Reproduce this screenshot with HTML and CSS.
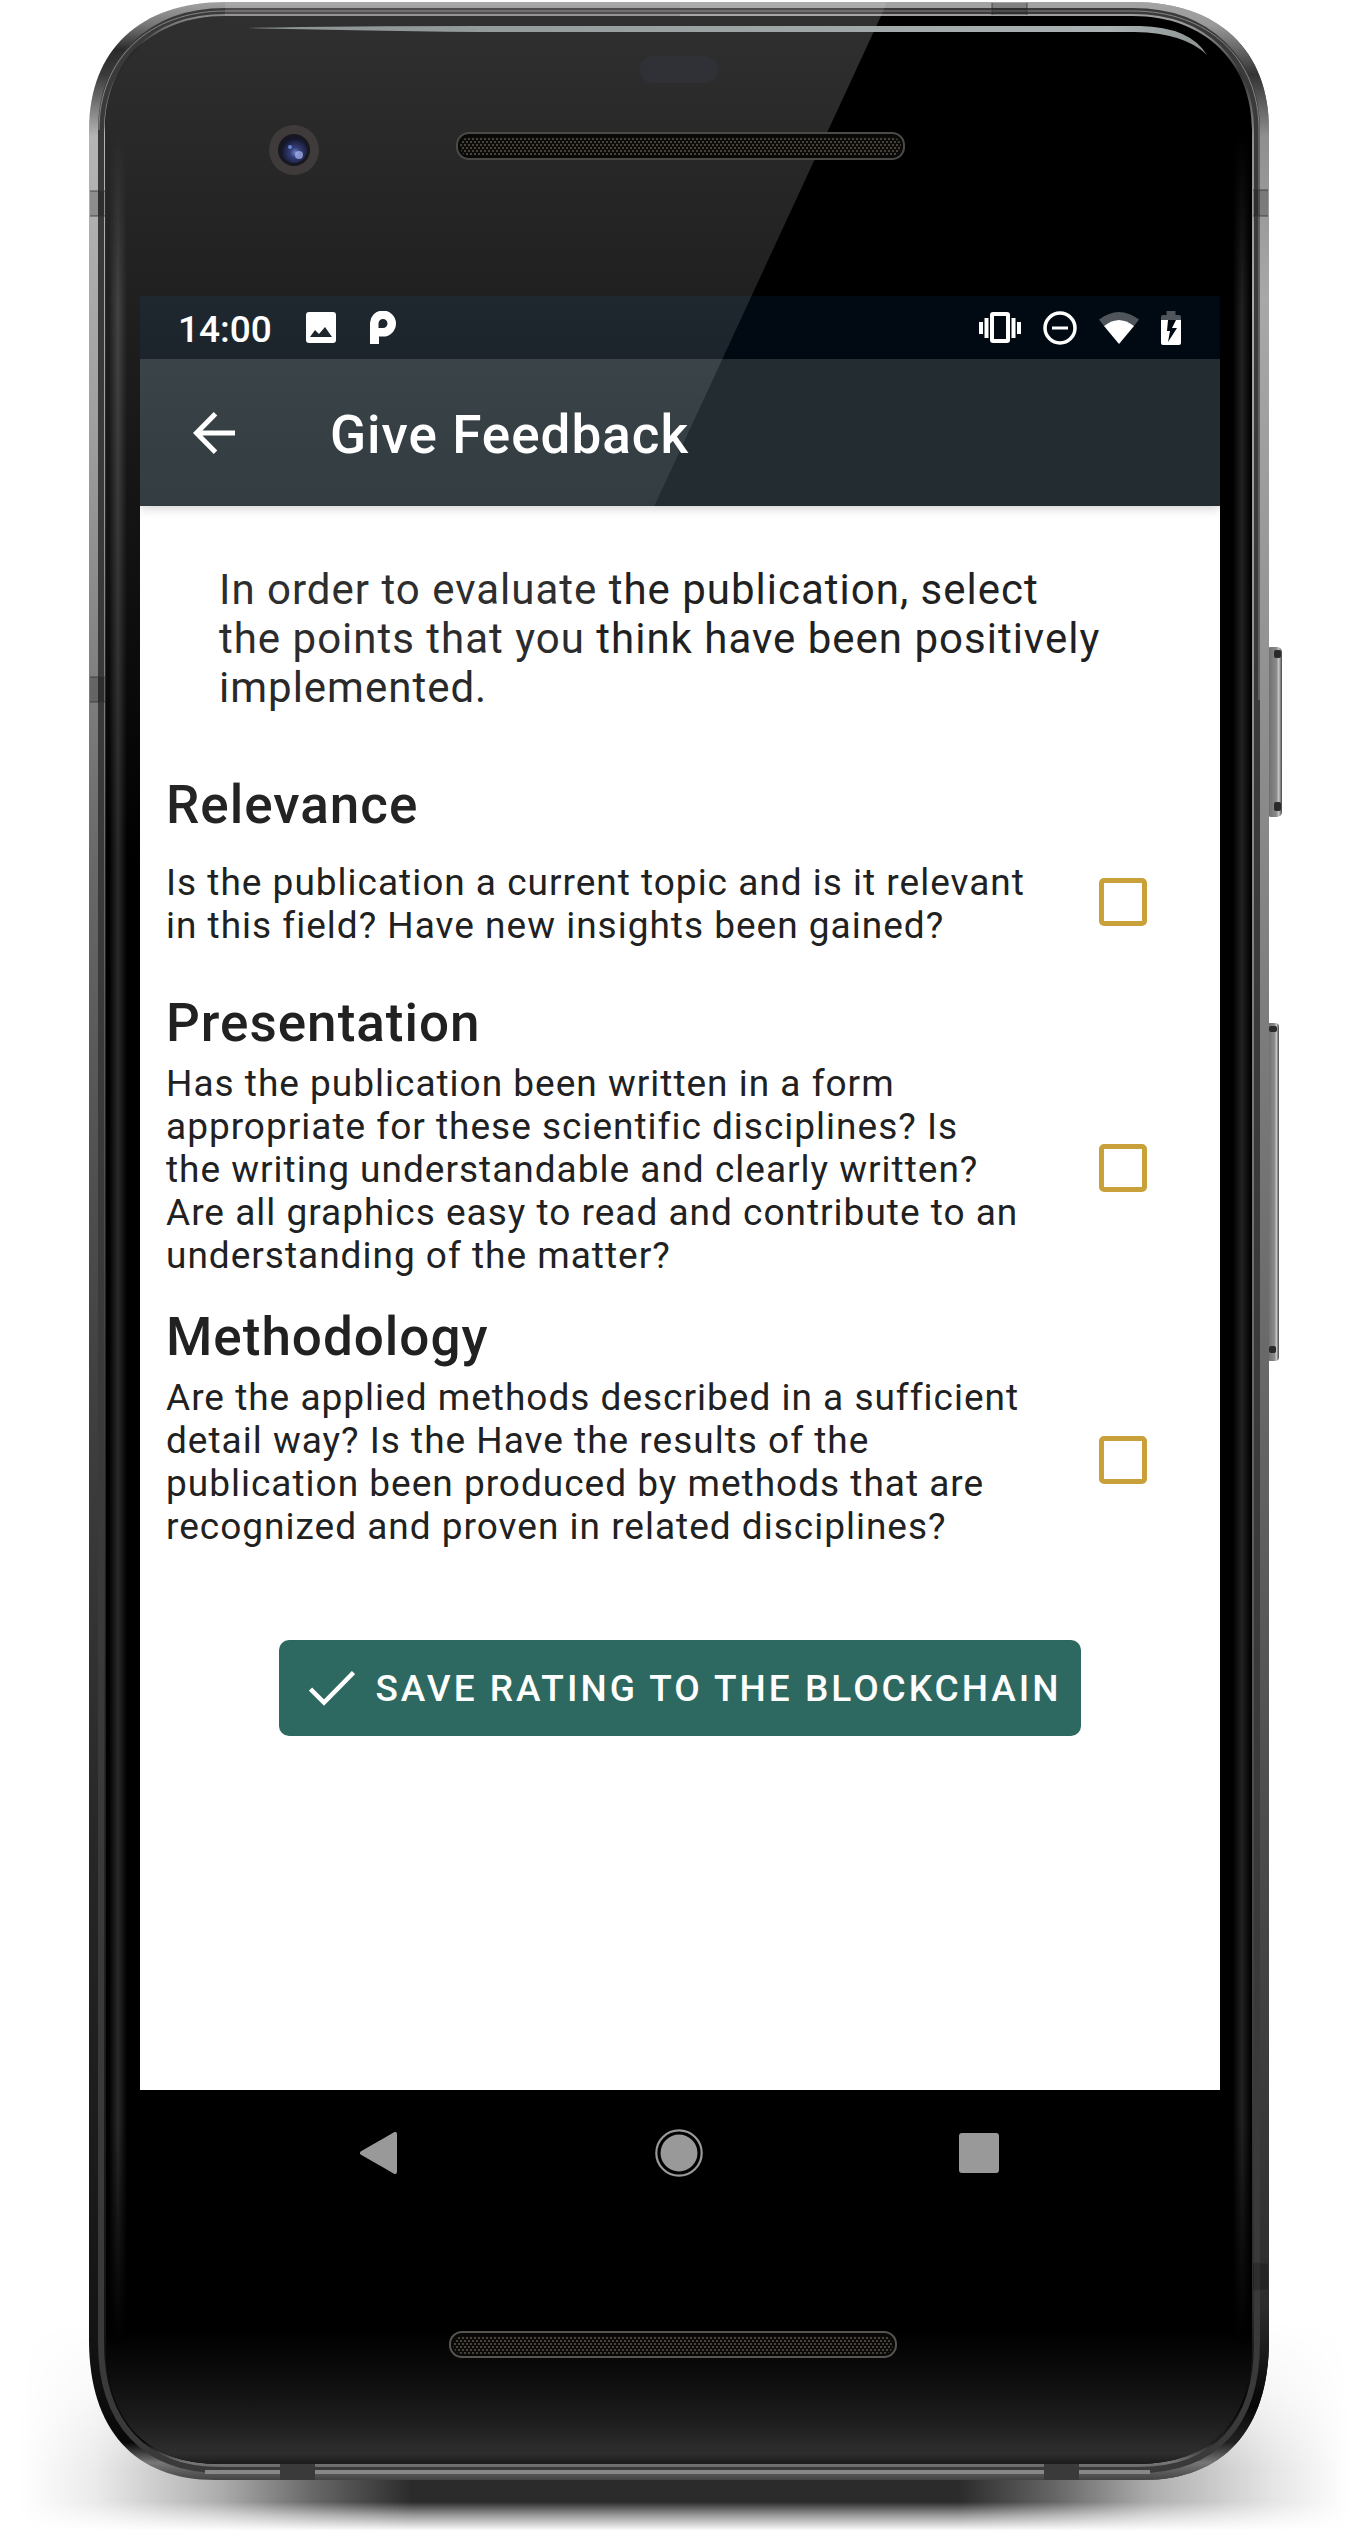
FILE: index.html
```html
<!DOCTYPE html>
<html lang="en">
<head>
<meta charset="utf-8">
<meta name="viewport" content="width=device-width, initial-scale=1">
<title>Give Feedback</title>
<link rel="stylesheet" href="styles.css">
</head>
<body>
<div class="device">
  <svg class="device-art" viewBox="0 0 1370 2534" preserveAspectRatio="none" aria-hidden="true">
    <defs>
      <linearGradient id="shadowX" x1="0" x2="1370" y1="0" y2="0" gradientUnits="userSpaceOnUse">
        <stop offset=".015" stop-opacity="0"/><stop offset=".07" stop-opacity=".08"/><stop offset=".16" stop-opacity=".32"/><stop offset=".23" stop-opacity=".6"/><stop offset=".3" stop-opacity=".83"/>
        <stop offset=".7" stop-opacity=".83"/><stop offset=".77" stop-opacity=".6"/><stop offset=".84" stop-opacity=".32"/><stop offset=".93" stop-opacity=".1"/><stop offset=".985" stop-opacity="0"/>
      </linearGradient>
      <linearGradient id="shadowY" x1="0" x2="0" y1="2320" y2="2534" gradientUnits="userSpaceOnUse">
        <stop offset="0" stop-color="#fff" stop-opacity="0"/><stop offset=".35" stop-color="#fff" stop-opacity=".35"/><stop offset=".7" stop-color="#fff"/><stop offset=".85" stop-color="#fff"/><stop offset=".91" stop-color="#fff" stop-opacity=".5"/><stop offset=".985" stop-color="#fff" stop-opacity="0"/>
      </linearGradient>
      <mask id="shadowMask"><rect y="2320" width="1370" height="214" fill="url(#shadowY)"/></mask>
      <linearGradient id="metal" x1="0" x2="0" y1="0" y2="2480" gradientUnits="userSpaceOnUse">
        <stop offset="0" stop-color="#a5a5a5"/><stop offset=".01" stop-color="#777"/><stop offset=".02" stop-color="#2a2a2a"/><stop offset=".03" stop-color="#3a3a3a"/><stop offset=".055" stop-color="#b4b6b6"/><stop offset=".17" stop-color="#a0a0a0"/><stop offset=".35" stop-color="#686868"/><stop offset=".55" stop-color="#424242"/><stop offset=".75" stop-color="#262626"/><stop offset=".94" stop-color="#141414"/><stop offset=".985" stop-color="#080808"/><stop offset=".993" stop-color="#777"/><stop offset="1" stop-color="#444"/>
      </linearGradient>
      <linearGradient id="metalRight" x1="0" x2="0" y1="0" y2="2480" gradientUnits="userSpaceOnUse">
        <stop offset="0" stop-color="#a5a5a5"/><stop offset=".01" stop-color="#999"/><stop offset=".03" stop-color="#333"/><stop offset=".055" stop-color="#8f8f8f"/><stop offset=".12" stop-color="#a8a8a8"/><stop offset=".35" stop-color="#868686"/><stop offset=".6" stop-color="#616161"/><stop offset=".8" stop-color="#424242"/><stop offset=".93" stop-color="#2c2c2c"/><stop offset=".97" stop-color="#060606"/><stop offset=".985" stop-color="#222"/><stop offset=".993" stop-color="#777"/><stop offset="1" stop-color="#444"/>
      </linearGradient>
      <linearGradient id="chin" x1="0" x2="0" y1="2330" y2="2464" gradientUnits="userSpaceOnUse">
        <stop offset="0" stop-color="#000"/><stop offset=".3" stop-color="#0b0b0b"/><stop offset=".65" stop-color="#1b1b1b"/><stop offset=".92" stop-color="#2e2e2e"/><stop offset="1" stop-color="#1c1c1c"/>
      </linearGradient>
      <linearGradient id="edgeLight" x1="0" x2="1" y1="0" y2="0">
        <stop offset="0" stop-color="#2a2a2a" stop-opacity="0"/><stop offset=".5" stop-color="#2a2a2a"/><stop offset="1" stop-color="#2a2a2a" stop-opacity="0"/>
      </linearGradient>
      <linearGradient id="edgeFade" x1="0" x2="0" y1="130" y2="2345" gradientUnits="userSpaceOnUse">
        <stop offset="0" stop-color="#fff" stop-opacity="0"/><stop offset=".08" stop-color="#fff"/><stop offset=".9" stop-color="#fff"/><stop offset="1" stop-color="#fff" stop-opacity="0"/>
      </linearGradient>
      <mask id="edgeMask" maskUnits="userSpaceOnUse" x="0" y="0" width="1370" height="2534"><rect y="130" width="1370" height="2215" fill="url(#edgeFade)"/></mask>
      <linearGradient id="key" x1="0" x2="1" y1="0" y2="0">
        <stop offset="0" stop-color="#666"/><stop offset=".65" stop-color="#8a8a8a"/><stop offset=".8" stop-color="#c8c8c8"/><stop offset="1" stop-color="#444"/>
      </linearGradient>
    </defs>

    <rect y="2320" width="1370" height="214" fill="url(#shadowX)" mask="url(#shadowMask)"/>

    <!-- side keys -->
    <rect x="1266" y="647" width="16" height="170" rx="5" fill="url(#key)"/>
    <rect x="1274" y="650" width="7" height="8" rx="2" fill="#2a2a2a"/><rect x="1274" y="802" width="7" height="9" rx="2" fill="#2a2a2a"/>
    <rect x="1266" y="1023" width="13" height="338" rx="4" fill="url(#key)"/>
    <rect x="1269" y="1026" width="8" height="6" rx="2" fill="#2a2a2a"/><rect x="1269" y="1346" width="7" height="7" rx="2" fill="#2a2a2a"/>

    <!-- metal body -->
    <path d="M89 130C89 50 140 2 225 2H1133C1218 2 1269 50 1269 130V2340C1269 2430 1223 2480 1143 2480H215C135 2480 89 2430 89 2340Z" fill="url(#metal)"/>
    <path d="M680 2H1133C1218 2 1269 50 1269 130V2340C1269 2430 1223 2480 1143 2480H680Z" fill="url(#metalRight)"/>
    <path d="M101 130C101 60 150 11 225 11H1133C1208 11 1257 60 1257 130V2343C1257 2423 1216 2470 1138 2470H220C145 2470 101 2423 101 2343Z" fill="none" stroke="#3a3a3a" stroke-width="6"/>
    <path d="M99 130C99 58 150 11 225 11H1133C1208 11 1259 58 1259 130V700" fill="none" stroke="#8a8482" stroke-width="1"/>
    <path d="M205 2472H1150" fill="none" stroke="#888" stroke-width="4"/>

    <!-- antenna bands -->
    <g fill="#000" fill-opacity=".2">
      <rect x="90" y="191" width="15" height="25"/><rect x="90" y="677" width="15" height="25"/>
      <rect x="1253" y="190" width="15" height="26"/><rect x="1253" y="2263" width="15" height="27"/>
      <rect x="992" y="3" width="35" height="12"/>
    </g>
    <g fill="#3a3a3a"><rect x="280" y="2464" width="35" height="16"/><rect x="1044" y="2464" width="35" height="16"/></g>
    <path fill="none" stroke="#333" stroke-width="1" stroke-opacity=".8" d="M90 191H105M90 216H105M90 677H105M90 702H105M1253 190H1268M1253 216H1268M1253 2263H1268M1253 2290H1268M992 3V15M1027 3V15"/>

    <!-- glass -->
    <path d="M105 130C105 64 152 16 225 16H1133C1206 16 1252 64 1252 130V2345C1252 2420 1212 2464 1137 2464H220C145 2464 106 2420 106 2345Z" fill="#000"/>
    <path d="M106 2330H1252V2345C1252 2420 1212 2464 1137 2464H220C145 2464 106 2420 106 2345Z" fill="url(#chin)"/>
    <g mask="url(#edgeMask)">
      <rect x="109" y="130" width="18" height="2215" fill="url(#edgeLight)"/>
      <rect x="1233" y="130" width="18" height="2215" fill="url(#edgeLight)" opacity=".8"/>
    </g>
  </svg>

  <header class="bezel-top"></header>

  <div class="screen">
    <div class="status-bar">
      <div class="status-left">
        <time class="clock" datetime="14:00">14:00</time>
        <svg width="30" height="31" viewBox="0 0 30 31" aria-hidden="true"><path fill="#fff" fill-rule="evenodd" d="M3 0H27Q30 0 30 3V28Q30 31 27 31H3Q0 31 0 28V3Q0 0 3 0ZM4 25H26L19 15L13 22L9 18Z"/></svg>
        <svg width="26" height="33" viewBox="0 0 26 33" aria-hidden="true"><path fill="#fff" fill-rule="evenodd" d="M0 33V13A13 13 0 1 1 13 25.500H9V33ZM8.500 17H13A4.500 4.500 0 1 0 8.500 12.500Z"/></svg>
      </div>
      <div class="status-right">
        <svg width="42" height="32" viewBox="0 0 42 32" aria-hidden="true"><path fill="#fff" fill-rule="evenodd" d="M14 0H28Q31 0 31 3V28Q31 31 28 31H14Q11 31 11 28V3Q11 0 14 0ZM15 4V27H27V4ZM0 10H4V22H0ZM5.500 6H9.500V26H5.500ZM32.500 6H36.500V26H32.500ZM38 10H42V22H38Z"/></svg>
        <svg width="34" height="34" viewBox="0 0 34 34" aria-hidden="true"><circle cx="17" cy="17" r="15" fill="none" stroke="#fff" stroke-width="3.500"/><path fill="#fff" d="M9 15.500H25V18.500H9Z"/></svg>
        <svg width="40" height="32" viewBox="0 0 40 32" aria-hidden="true"><path fill="#4f555b" d="M0 7.500Q20-7.500 40 7.500L35 14Q20 2 5 14Z"/><path fill="#fff" d="M5 14Q20 2 35 14L20 32Z"/></svg>
        <svg width="20" height="34" viewBox="0 0 20 34" aria-hidden="true"><path fill="#4f555b" d="M5.500 0H14.500V4H18Q20 4 20 6V9H0V6Q0 4 2 4H5.500Z"/><path fill="#fff" fill-rule="evenodd" d="M0 9H20V32Q20 34 18 34H2Q0 34 0 32ZM7 9L6 20H9L7 31L16 17H11L15 9Z"/></svg>
      </div>
    </div>

    <div class="app-bar">
      <button class="back" type="button" aria-label="Back">
        <svg width="42" height="42" viewBox="0 0 42 42" aria-hidden="true"><path fill="none" stroke="#fff" stroke-width="5" d="M42 21H4M22.500 1.800L3.500 21L22.500 40.200"/></svg>
      </button>
      <h1 class="title">Give Feedback</h1>
    </div>

    <main class="content">
      <p class="intro">In order to evaluate the publication, select the points that you think have been positively implemented.</p>

      <form class="criteria">
        <section class="criterion">
          <h2 class="heading">Relevance</h2>
          <div class="row row-tall">
            <label class="question" for="relevance">Is the publication a current topic and is it relevant in this field? Have new insights been gained?</label>
            <input class="check" type="checkbox" id="relevance">
          </div>
        </section>
        <section class="criterion">
          <h2 class="heading">Presentation</h2>
          <div class="row">
            <label class="question" for="presentation">Has the publication been written in a form appropriate for these scientific disciplines? Is<br>the writing understandable and clearly written? Are all graphics easy to read and contribute to an understanding of the matter?</label>
            <input class="check" type="checkbox" id="presentation">
          </div>
        </section>
        <section class="criterion">
          <h2 class="heading">Methodology</h2>
          <div class="row">
            <label class="question" for="methodology">Are the applied methods described in a sufficient detail way? Is the Have the results of the publication been produced by methods that are recognized and proven in related disciplines?</label>
            <input class="check" type="checkbox" id="methodology">
          </div>
        </section>
        <button class="save" type="button">
          <svg width="46" height="36" viewBox="0 0 46 36" aria-hidden="true"><path fill="none" stroke="#fff" stroke-width="4.500" d="M1.500 19L15 32.500L44.500 2.500"/></svg>
          <span>SAVE RATING TO THE BLOCKCHAIN</span>
        </button>
      </form>
    </main>

    <nav class="nav-bar" aria-label="System">
      <button class="nav-key" type="button" aria-label="Back">
        <svg width="37" height="42" viewBox="0 0 37 42" aria-hidden="true"><path fill="#999" stroke="#999" stroke-width="4" stroke-linejoin="round" d="M2 21L35 2V40Z"/></svg>
      </button>
      <button class="nav-key" type="button" aria-label="Home">
        <svg width="48" height="48" viewBox="0 0 48 48" aria-hidden="true"><circle cx="24" cy="24" r="18.500" fill="#999"/><circle cx="24" cy="24" r="22.700" fill="none" stroke="#999" stroke-width="2.200"/></svg>
      </button>
      <button class="nav-key" type="button" aria-label="Overview">
        <svg width="40" height="40" viewBox="0 0 40 40" aria-hidden="true"><rect width="40" height="40" rx="3" fill="#999"/></svg>
      </button>
    </nav>
  </div>

  <footer class="bezel-bottom"></footer>

  <svg class="device-glare" viewBox="0 0 1370 2534" preserveAspectRatio="none" aria-hidden="true">
    <defs>
      <linearGradient id="topShine" x1="248" x2="1207" y1="0" y2="0" gradientUnits="userSpaceOnUse">
        <stop offset="0" stop-color="#8d9393"/><stop offset=".9" stop-color="#a9b1b2"/><stop offset="1" stop-color="#8d9393"/>
      </linearGradient>
      <radialGradient id="lens" cx=".55" cy=".6" r=".55">
        <stop offset="0" stop-color="#7083cc"/><stop offset=".35" stop-color="#343f78"/><stop offset="1" stop-color="#14162a"/>
      </radialGradient>
      <pattern id="mesh" width="4" height="6" patternUnits="userSpaceOnUse">
        <rect width="4" height="6" fill="#0c0b0a"/><rect width="2" height="2" fill="#47433b"/><rect x="2" y="3" width="2" height="2" fill="#47433b"/>
      </pattern>
      <linearGradient id="glareFill" x1="0" x2="0" y1="0" y2="870" gradientUnits="userSpaceOnUse">
        <stop offset="0" stop-color="#fff" stop-opacity=".19"/><stop offset=".58" stop-color="#fff" stop-opacity=".08"/><stop offset="1" stop-color="#fff" stop-opacity="0"/>
      </linearGradient>
    </defs>
    <path d="M105 130C105 64 152 16 225 16H881L486 870H105Z" fill="url(#glareFill)"/>
    <path d="M225 2H887L881 16H225Z" fill="#fff" fill-opacity=".1"/>
    <path d="M248 28Q340 26 480 26H1140Q1190 27 1207 55Q1185 33 1135 32H480Q340 30 248 28Z" fill="url(#topShine)"/>
    <rect x="640" y="56" width="78" height="27" rx="13" fill="#303136"/>
    <circle cx="294" cy="150" r="25" fill="#3f3b3b"/>
    <circle cx="294" cy="150" r="16" fill="#17171f"/>
    <circle cx="294" cy="150" r="13" fill="url(#lens)"/>
    <circle cx="299" cy="155" r="4" fill="#a9b8ee" opacity=".7"/><circle cx="290" cy="147" r="2" fill="#6b85d8"/>
    <rect x="457" y="133" width="447" height="26" rx="12" fill="#080808" stroke="#4c4a47" stroke-width="2"/>
    <rect x="460" y="137" width="441" height="19" rx="9" fill="url(#mesh)"/>
    <rect x="450" y="2332" width="446" height="25" rx="12" fill="#080808" stroke="#57544f" stroke-width="2"/>
    <rect x="453" y="2336" width="440" height="18" rx="9" fill="url(#mesh)"/>
  </svg>
</div>
</body>
</html>
```
FILE: styles.css
```css
* {
  box-sizing: border-box;
}

body {
  margin: 0;
  background: #fff;
  color: #212121;
  font-family: Roboto, "Noto Sans", sans-serif;
}

h1,
h2,
p {
  margin: 0;
  font-weight: 400;
}

button {
  border: 0;
  padding: 0;
  background: none;
  color: #fff;
  font-family: inherit;
}

svg {
  display: block;
}

.device {
  position: relative;
  display: flex;
  flex-direction: column;
  min-height: 100vh;
  padding: 0 150px 0 140px;
}

.device-art,
.device-glare {
  position: absolute;
  inset: 0;
  width: 100%;
  height: 100%;
  pointer-events: none;
}

.device-glare {
  z-index: 2;
}

.bezel-top {
  height: 296px;
}

.bezel-bottom {
  height: 318px;
}

.screen {
  position: relative;
  flex: 1;
  display: flex;
  flex-direction: column;
}

.status-bar {
  display: flex;
  align-items: center;
  justify-content: space-between;
  height: 63px;
  padding: 0 39px 0 38px;
  background: #010a12;
  color: #fff;
}

.status-left {
  display: flex;
  align-items: center;
  gap: 34px;
}

.status-right {
  display: flex;
  align-items: center;
  gap: 22px;
}

.clock {
  padding-top: 4px;
  font-size: 37px;
  line-height: 43px;
  font-weight: 500;
}

.app-bar {
  z-index: 1;
  display: flex;
  align-items: center;
  gap: 95px;
  height: 147px;
  padding: 0 53px;
  background: #222c31;
  color: #fff;
  box-shadow: 0 2px 10px rgba(0, 0, 0, 0.2);
}

.title {
  padding-top: 4px;
  font-size: 53px;
  line-height: 62px;
  font-weight: 500;
  letter-spacing: 1px;
}

.content {
  flex: 1;
  padding: 59px 26px 0;
  background: #fff;
}

.intro {
  max-width: 940px;
  padding-left: 53px;
  font-size: 42px;
  line-height: 49px;
  letter-spacing: 1px;
}

.criteria {
  display: flex;
  flex-direction: column;
  gap: 29px;
  padding-top: 62px;
}

.criterion {
  display: flex;
  flex-direction: column;
  gap: 8px;
}

.heading {
  font-size: 53px;
  line-height: 62px;
  font-weight: 500;
  letter-spacing: 1px;
}

.row {
  display: flex;
  align-items: center;
  justify-content: space-between;
  padding-right: 47px;
}

.row-tall {
  min-height: 119px;
}

.question {
  width: 866px;
  font-size: 37px;
  line-height: 43px;
  letter-spacing: 1px;
}

.check {
  appearance: none;
  flex: none;
  width: 48px;
  height: 48px;
  margin: 0 0 4px;
  border: 5px solid #c9a13b;
  border-radius: 5px;
}

.check:checked {
  background: #c9a13b;
}

.save {
  display: flex;
  align-items: center;
  align-self: center;
  gap: 20px;
  height: 96px;
  margin-top: 63px;
  padding: 0 19px 0 30px;
  border-radius: 10px;
  background: #2d6960;
  font-size: 37px;
  font-weight: 500;
  letter-spacing: 3px;
}

.nav-bar {
  display: flex;
  align-items: center;
  justify-content: space-between;
  height: 126px;
  padding: 0 178px 0 175px;
  background: #000;
}

.nav-key {
  display: grid;
  place-items: center;
  width: 126px;
  height: 126px;
}
```
